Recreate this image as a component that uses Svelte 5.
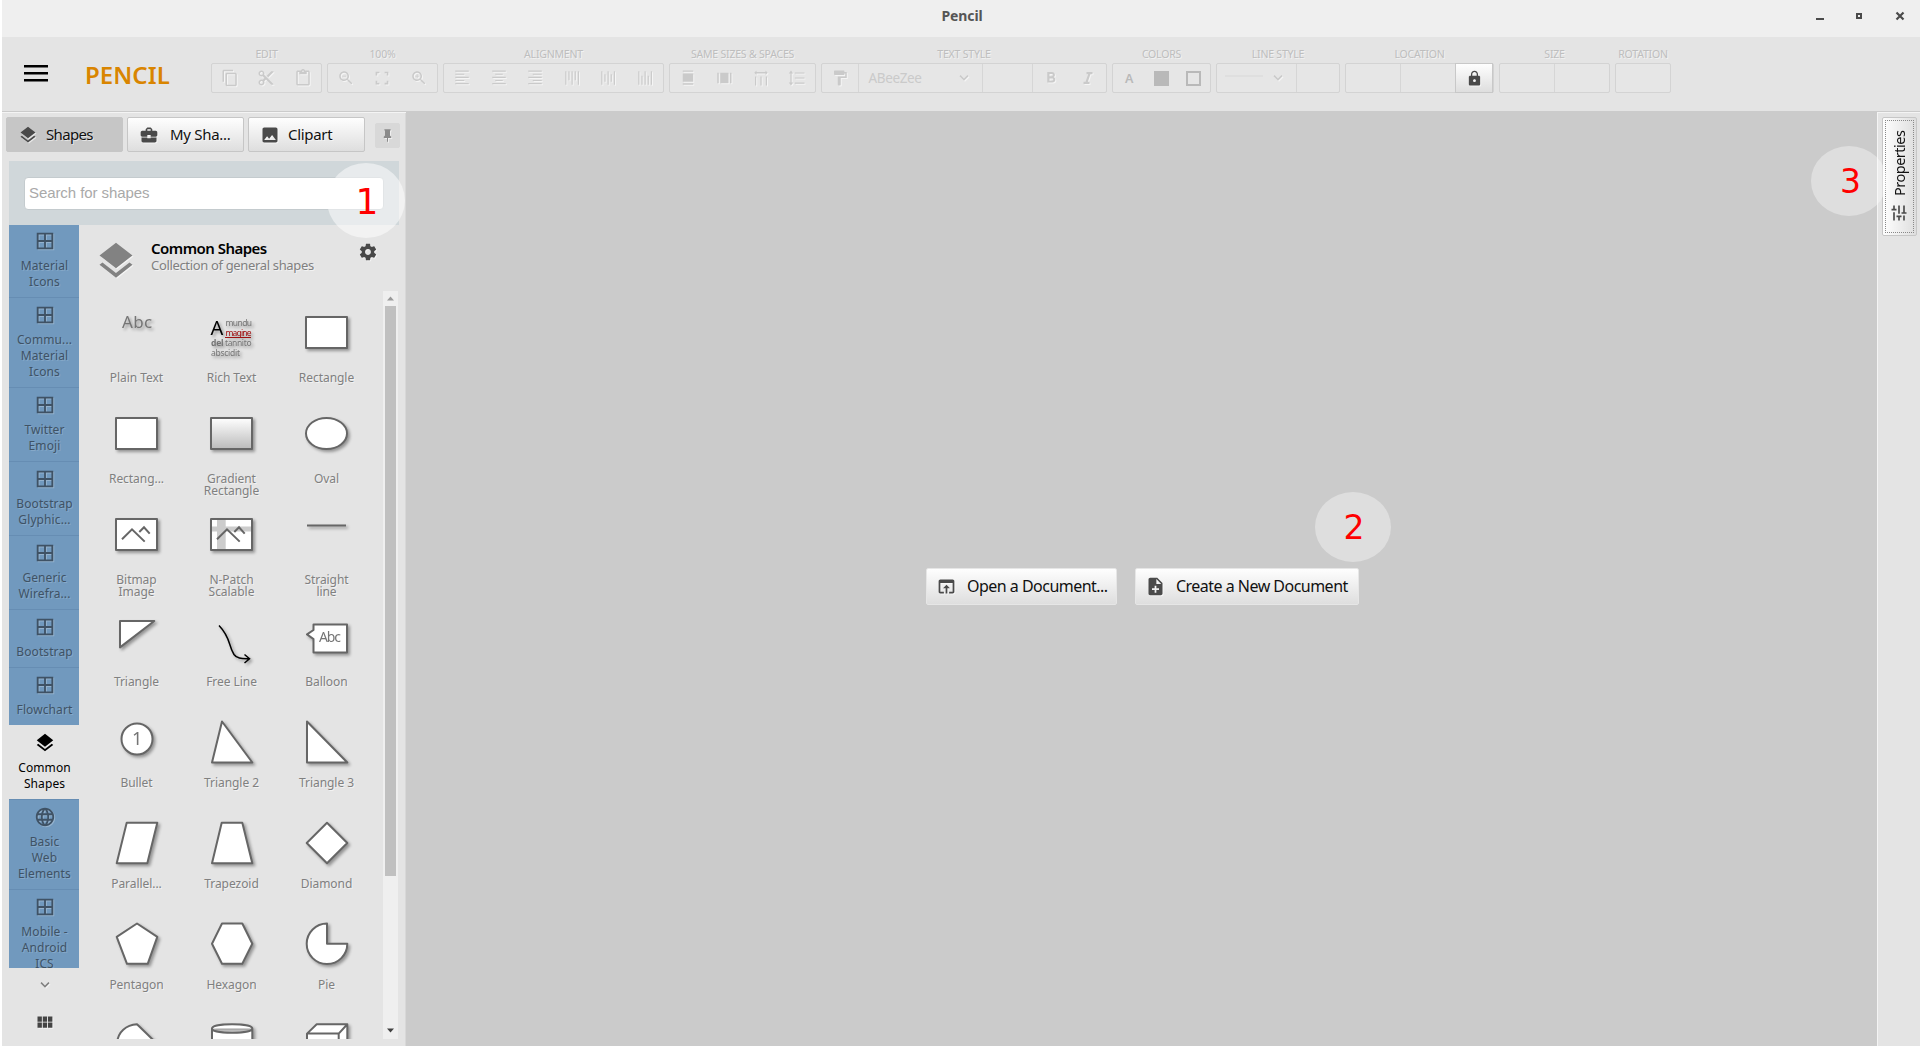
<script>
  const icons = {
    copy: 'M16 1H4c-1.1 0-2 .9-2 2v14h2V3h12V1zm3 4H8c-1.1 0-2 .9-2 2v14c0 1.1.9 2 2 2h11c1.1 0 2-.9 2-2V7c0-1.1-.9-2-2-2zm0 16H8V7h11v14z',
    cut: 'M9.64 7.64c.23-.5.36-1.05.36-1.64 0-2.21-1.79-4-4-4S2 3.79 2 6s1.79 4 4 4c.59 0 1.14-.13 1.64-.36L10 12l-2.36 2.36C7.14 14.13 6.59 14 6 14c-2.21 0-4 1.79-4 4s1.79 4 4 4 4-1.79 4-4c0-.59-.13-1.14-.36-1.64L12 14l7 7h3v-1L9.64 7.64zM6 8c-1.1 0-2-.89-2-2s.9-2 2-2 2 .89 2 2-.9 2-2 2zm0 12c-1.1 0-2-.89-2-2s.9-2 2-2 2 .89 2 2-.9 2-2 2zM19 3l-6 6 2 2 7-7V3z',
    paste: 'M19 2h-4.18C14.4.84 13.3 0 12 0c-1.3 0-2.4.84-2.82 2H5c-1.1 0-2 .9-2 2v16c0 1.1.9 2 2 2h14c1.1 0 2-.9 2-2V4c0-1.1-.9-2-2-2zm-7 0c.55 0 1 .45 1 1s-.45 1-1 1-1-.45-1-1 .45-1 1-1zm7 18H5V4h2v3h10V4h2v16z',
    zoomOut: 'M15.5 14h-.79l-.28-.27C15.41 12.59 16 11.11 16 9.5 16 5.91 13.09 3 9.5 3S3 5.91 3 9.5 5.91 16 9.5 16c1.61 0 3.09-.59 4.23-1.57l.27.28v.79l5 4.99L20.49 19l-4.99-5zm-6 0C7.01 14 5 11.99 5 9.5S7.01 5 9.5 5 14 7.01 14 9.5 11.99 14 9.5 14zM7 9h5v1H7z',
    fit: 'M3.500 8.500V3.500h5v2.200H5.700v2.800zM15.500 3.500h5v5h-2.200V5.700h-2.800zM3.500 15.500h2.200v2.800h2.800v2.200h-5zM18.300 15.500h2.200v5h-5v-2.200h2.800z',
    zoomIn: 'M15.5 14h-.79l-.28-.27C15.41 12.59 16 11.11 16 9.5 16 5.91 13.09 3 9.5 3S3 5.91 3 9.5 5.91 16 9.5 16c1.61 0 3.09-.59 4.23-1.57l.27.28v.79l5 4.99L20.49 19l-4.99-5zm-6 0C7.01 14 5 11.99 5 9.5S7.01 5 9.5 5 14 7.01 14 9.5 11.99 14 9.5 14zM12 10h-2v2H9v-2H7V9h2V7h1v2h2v1z',
    left: 'M3 2h18v1.5H3zM3 6.2h12v1.5H3zM3 10.4h18v1.5H3zM3 14.6h12v1.5H3zM3 18.8h18v1.5H3z',
    center: 'M3 2h18v1.5H3zM7 6.2h10v1.5H7zM3 10.4h18v1.5H3zM7 14.6h10v1.5H7zM3 18.8h18v1.5H3z',
    right: 'M3 2h18v1.5H3zM9 6.2h12v1.5H9zM3 10.4h18v1.5H3zM9 14.6h12v1.5H9zM3 18.8h18v1.5H3z',
    top: 'M3 3h1.5v18H3zM7.2 3h1.5v12H7.2zM11.4 3h1.5v18h-1.5zM15.6 3h1.5v12h-1.5zM19.8 3h1.5v18h-1.5z',
    middle: 'M3 3h1.5v18H3zM7.2 7h1.5v10H7.2zM11.4 3h1.5v18h-1.5zM15.6 7h1.5v10h-1.5zM19.8 3h1.5v18h-1.5z',
    bottom: 'M3 3h1.5v18H3zM7.2 9h1.5v12H7.2zM11.4 3h1.5v18h-1.5zM15.6 9h1.5v12h-1.5zM19.8 3h1.5v18h-1.5z',
    sameW: 'M5 2h14v1.6H5zM5 6h14v11H5zM5 19h14v2H5z',
    sameH: 'M3 5h2v14H3zM7 5h11v14H7zM20 5h2v14h-2z',
    spaceH: 'M3 5l3-3v2h12V2l3 3-3 3V6H6v2zM4 10h1.6v12H4zM11.2 10h1.6v12h-1.6zM18.4 10H20v12h-1.6z',
    spaceV: 'M1 6l3-4 3 4H4.800v12H7l-3 4-3-4h2.200V6zM9 4.5h13V6H9zM9 11.2h13v1.5H9zM9 18h13v1.5H9z',
    paint: 'M18 4V3c0-.55-.45-1-1-1H5c-.55 0-1 .45-1 1v4c0 .55.45 1 1 1h12c.55 0 1-.45 1-1V6h1v4H9v11c0 .55.45 1 1 1h2c.55 0 1-.45 1-1v-9h8V4h-3z',
    chevron: 'M7.41 8.1L12 12.7l4.59-4.6L18 9.5l-6 6-6-6z',
    italic: 'M10 4v3h2.21l-3.42 10H6v3h8v-3h-2.21l3.42-10H18V4z',
    bold: 'M15.6 10.79c.97-.67 1.65-1.77 1.65-2.79 0-2.26-1.75-4-4-4H7v14h7.04c2.09 0 3.71-1.7 3.71-3.79 0-1.52-.86-2.82-2.15-3.42zM10 6.5h3c.83 0 1.5.67 1.5 1.5s-.67 1.5-1.5 1.5h-3v-3zm3.5 9H10v-3h3.5c.83 0 1.5.67 1.5 1.5s-.67 1.5-1.5 1.5z',
    lock: 'M18 8h-1V6c0-2.76-2.24-5-5-5S7 3.24 7 6v2H6c-1.1 0-2 .9-2 2v10c0 1.1.9 2 2 2h12c1.1 0 2-.9 2-2V10c0-1.1-.9-2-2-2zm-6 9c-1.1 0-2-.9-2-2s.9-2 2-2 2 .9 2 2-.9 2-2 2zm3.1-9H8.9V6c0-1.71 1.39-3.1 3.1-3.1 1.71 0 3.1 1.39 3.1 3.1v2z',
    layers: 'M11.99 18.54l-7.37-5.73L3 14.07l9 7 9-7-1.63-1.27-7.38 5.74zM12 16l7.36-5.73L21 9l-9-7-9 7 1.63 1.27L12 16z',
    briefcase: 'M10 16v-1H3.01L3 19c0 1.11.89 2 2 2h14c1.11 0 2-.89 2-2v-4h-7v1h-4zm10-9h-4.01V5l-2-2h-4l-2 2v2H4c-1.1 0-2 .9-2 2v3c0 1.11.89 2 2 2h6v-2h4v2h6c1.1 0 2-.9 2-2V9c0-1.1-.9-2-2-2zm-6 0h-4V5h4v2z',
    image: 'M21 19V5c0-1.1-.9-2-2-2H5c-1.1 0-2 .9-2 2v14c0 1.1.9 2 2 2h14c1.1 0 2-.9 2-2zM8.5 13.5l2.5 3.01L14.5 12l4.5 6H5l3.5-4.5z',
    pin: 'M16 12V4h1V2H7v2h1v8l-2 2v2h5.2v6h1.6v-6H18v-2z',
    gear: 'M19.43 12.98c.04-.32.07-.64.07-.98s-.03-.66-.07-.98l2.11-1.65c.19-.15.24-.42.12-.64l-2-3.46c-.12-.22-.39-.3-.61-.22l-2.49 1c-.52-.4-1.08-.73-1.69-.98l-.38-2.65C14.46 2.18 14.25 2 14 2h-4c-.25 0-.46.18-.49.42l-.38 2.65c-.61.25-1.17.59-1.69.98l-2.49-1c-.23-.09-.49 0-.61.22l-2 3.46c-.13.22-.07.49.12.64l2.11 1.65c-.04.32-.07.65-.07.98s.03.66.07.98l-2.11 1.65c-.19.15-.24.42-.12.64l2 3.46c.12.22.39.3.61.22l2.49-1c.52.4 1.08.73 1.69.98l.38 2.65c.03.24.24.42.49.42h4c.25 0 .46-.18.49-.42l.38-2.65c.61-.25 1.17-.59 1.69-.98l2.49 1c.23.09.49 0 .61-.22l2-3.46c.12-.22.07-.49-.12-.64l-2.11-1.65zM12 15.5c-1.93 0-3.5-1.57-3.5-3.5s1.57-3.5 3.5-3.5 3.5 1.57 3.5 3.5-1.57 3.5-3.5 3.5z',
    grid: 'M3 3v18h18V3H3zm8 16H5v-6h6v6zm0-8H5V5h6v6zm8 8h-6v-6h6v6zm0-8h-6V5h6v6z',
    globe: 'M11.99 2C6.47 2 2 6.48 2 12s4.47 10 9.99 10C17.52 22 22 17.52 22 12S17.52 2 11.99 2zm6.93 6h-2.95c-.32-1.25-.78-2.45-1.38-3.56 1.84.63 3.37 1.91 4.33 3.56zM12 4.04c.83 1.2 1.48 2.53 1.91 3.96h-3.82c.43-1.43 1.08-2.76 1.91-3.96zM4.26 14C4.1 13.36 4 12.69 4 12s.1-1.36.26-2h3.38c-.08.66-.14 1.32-.14 2 0 .68.06 1.34.14 2H4.26zm.82 2h2.95c.32 1.25.78 2.45 1.38 3.56-1.84-.63-3.37-1.9-4.33-3.56zm2.95-8H5.08c.96-1.66 2.49-2.93 4.33-3.56C8.81 5.55 8.35 6.75 8.03 8zM12 19.96c-.83-1.2-1.48-2.53-1.91-3.96h3.82c-.43 1.43-1.08 2.76-1.91 3.96zM14.34 14H9.66c-.09-.66-.16-1.32-.16-2 0-.68.07-1.35.16-2h4.68c.09.65.16 1.32.16 2 0 .68-.07 1.34-.16 2zm.25 5.56c.6-1.11 1.06-2.31 1.38-3.56h2.95c-.96 1.65-2.49 2.93-4.33 3.56zM16.36 14c.08-.66.14-1.32.14-2 0-.68-.06-1.34-.14-2h3.38c.16.64.26 1.31.26 2s-.1 1.36-.26 2h-3.38z',
    module: 'M4 11h5V5H4v6zm0 7h5v-6H4v6zm6 0h5v-6h-5v6zm6 0h5v-6h-5v6zm-6-7h5V5h-5v6zm6-6v6h5V5h-5z',
    open: 'M19 4H5c-1.11 0-2 .9-2 2v12c0 1.1.89 2 2 2h4v-2H5V8h14v10h-4v2h4c1.1 0 2-.9 2-2V6c0-1.1-.89-2-2-2zm-7 6l-4 4h3v6h2v-6h3l-4-4z',
    add: 'M14 2H6c-1.1 0-1.99.9-1.99 2L4 20c0 1.1.89 2 1.99 2H18c1.1 0 2-.9 2-2V8l-6-6zm2 14h-3v3h-2v-3H8v-2h3v-3h2v3h3v2zm-3-7V3.5L18.5 9H13z',
    tune: 'M3 17v2h6v-2H3zM3 5v2h10V5H3zm10 16v-2h8v-2h-8v-2h-2v6h2zM7 9v2H3v2h4v2h2V9H7zm14 4v-2H11v2h10zm-6-4h2V7h4V5h-4V3h-2v6z'
  };

  const iconGroups = [
    { label: 'EDIT', items: ['copy', 'cut', 'paste'] },
    { label: '100%', items: ['zoomOut', 'fit', 'zoomIn'] },
    { label: 'ALIGNMENT', items: ['left', 'center', 'right', 'top', 'middle', 'bottom'], wide: true },
    { label: 'SAME SIZES & SPACES', items: ['sameW', 'sameH', 'spaceH', 'spaceV'], same: true }
  ];

  const tabs = [
    { icon: 'layers', label: 'Shapes', active: true },
    { icon: 'briefcase', label: 'My Sha...' },
    { icon: 'image', label: 'Clipart' }
  ];

  const collections = [
    { icon: 'grid', lines: ['Material', 'Icons'] },
    { icon: 'grid', lines: ['Commu...', 'Material', 'Icons'] },
    { icon: 'grid', lines: ['Twitter', 'Emoji'] },
    { icon: 'grid', lines: ['Bootstrap', 'Glyphic...'] },
    { icon: 'grid', lines: ['Generic', 'Wirefra...'] },
    { icon: 'grid', lines: ['Bootstrap'] },
    { icon: 'grid', lines: ['Flowchart'] },
    { icon: 'layers', lines: ['Common', 'Shapes'], active: true },
    { icon: 'globe', lines: ['Basic', 'Web', 'Elements'] },
    { icon: 'grid', lines: ['Mobile -', 'Android', 'ICS'] }
  ];

  const box = 'M11 12h41v31H11z';
  const shapes = [
    { id: 'plain', lines: ['Plain Text'] },
    { id: 'rich', lines: ['Rich Text'] },
    { d: box, lines: ['Rectangle'] },
    { d: box, lines: ['Rectang...'] },
    { id: 'gradient', lines: ['Gradient', 'Rectangle'] },
    { id: 'oval', lines: ['Oval'] },
    { id: 'bitmap', lines: ['Bitmap', 'Image'] },
    { id: 'npatch', lines: ['N-Patch', 'Scalable'] },
    { d: 'M12 18.5H51', lines: ['Straight', 'line'] },
    { d: 'M15 12H49.3L15 38.4z', lines: ['Triangle'] },
    { id: 'free', lines: ['Free Line'] },
    { id: 'balloon', lines: ['Balloon'] },
    { id: 'bullet', lines: ['Bullet'] },
    { d: 'M22 11.5L52.3 52.5H12z', lines: ['Triangle 2'] },
    { d: 'M12 11.5L52.3 52.5H12z', lines: ['Triangle 3'] },
    { d: 'M21.7 11.7H52.3L42.3 52.3H11.7z', lines: ['Parallel...'] },
    { d: 'M21.7 11.7H42.3L52.3 52.3H12z', lines: ['Trapezoid'] },
    { d: 'M32 11.7L52.3 32 32 52.3 11.7 32z', lines: ['Diamond'] },
    { d: 'M32 11.5L52.3 24.8 42.7 51.8H22L11.7 24.8z', lines: ['Pentagon'] },
    { d: 'M22 11.5H42.3L52.3 31.8 42.3 51.8H22L12 31.8z', lines: ['Hexagon'] },
    { d: 'M32 11.5A20.3 20.3 0 1 0 52.3 31.8H32z', lines: ['Pie'] },
    { d: 'M12 32C12 18 22 12 32 11.3L52.3 31 32 52z', lines: [] },
    { d: 'M12 15.5C12 9.8 52.3 9.8 52.3 15.5V48H12zC12 21.2 52.3 21.2 52.3 15.5', lines: [] },
    { d: 'M12 20.6L21.7 11.3H52.3V43L43.7 52H12zH43.7V52M43.7 20.6L52.3 11.3', lines: [] }
  ];
</script>

{#snippet icon(name, cls = '')}
  <svg class="icon {cls}" viewBox="0 0 24 24"><path d={icons[name]} /></svg>
{/snippet}

<div class="window">
  <header class="titlebar">
    <span class="title">Pencil</span>
    <svg class="controls" viewBox="0 0 100 20">
      <path d="M6 10h8v2H6z" />
      <path fill-rule="evenodd" d="M46 5h6v6h-6zM48 7v2h2V7z" />
      <path class="close" d="M86.5 4.500l7 7M93.500 4.500l-7 7" />
    </svg>
  </header>

  <div class="toolbar">
    <svg class="burger" viewBox="0 0 24 17"><path d="M0 0h24v2.500H0zM0 7h24v2.500H0zM0 14h24v2.500H0z" /></svg>
    <span class="brand">PENCIL</span>
    <div class="groups">
      {#each iconGroups as g}
        <div class="group">
          <span class="glabel">{g.label}</span>
          <div class="gbox" class:wide={g.wide} class:same={g.same}>
            {#each g.items as i}
              <span class="tool">{@render icon(i)}</span>
            {/each}
          </div>
        </div>
      {/each}
      <div class="group">
        <span class="glabel">TEXT STYLE</span>
        <div class="gbox textbox">
          <span class="tool">{@render icon('paint')}</span>
          <span class="font">ABeeZee {@render icon('chevron')}</span>
          <span class="fsize"></span>
          <span class="tool">{@render icon('bold', 'big')}</span>
          <span class="tool">{@render icon('italic')}</span>
        </div>
      </div>
      <div class="group">
        <span class="glabel">COLORS</span>
        <div class="gbox colors">
          <span class="letter">A</span>
          <span><i class="fill"></i></span>
          <span><i class="line"></i></span>
        </div>
      </div>
      <div class="group">
        <span class="glabel">LINE STYLE</span>
        <div class="gbox linestyle">
          <span class="stroke"><i></i>{@render icon('chevron')}</span>
          <span></span>
        </div>
      </div>
      <div class="group">
        <span class="glabel">LOCATION</span>
        <div class="gbox location">
          <span></span><span></span>
          <span class="lock">{@render icon('lock')}</span>
        </div>
      </div>
      <div class="group">
        <span class="glabel">SIZE</span>
        <div class="gbox size"><span></span><span></span></div>
      </div>
      <div class="group">
        <span class="glabel">ROTATION</span>
        <div class="gbox rotation"></div>
      </div>
    </div>
  </div>

  <div class="body">
    <aside class="sidebar">
      <div class="tabs">
        {#each tabs as t}
          <button class="tab" class:active={t.active}>{@render icon(t.icon)}<span>{t.label}</span></button>
        {/each}
        <button class="pin">{@render icon('pin')}</button>
      </div>
      <div class="search"><input placeholder="Search for shapes" /></div>
      <div class="panes">
        <div class="rail">
          <div class="collections">
            {#each collections as c}
              <div class="collection" class:active={c.active}>
                {@render icon(c.icon)}
                {#each c.lines as l}<span>{l}</span>{/each}
              </div>
            {/each}
          </div>
          <div class="more">{@render icon('chevron')}</div>
          <div class="all">{@render icon('module')}</div>
        </div>

        <div class="shapes">
          <div class="head">
            {@render icon('layers', 'huge')}
            <div class="headtext">
              <strong>Common Shapes</strong>
              <span>Collection of general shapes</span>
            </div>
            {@render icon('gear', 'gear')}
          </div>
          <div class="scroller">
            <div class="grid">
              {#each shapes as s}
                <div class="cell">
                  <svg class="shape" viewBox="0 0 63 64">
                    {#if s.d}
                      <path class="o" d={s.d} />
                    {:else if s.id === 'plain'}
                      <text class="abc" x="32" y="23" text-anchor="middle" textLength="30">Abc</text>
                    {:else if s.id === 'rich'}
                      <text class="cap" x="10.5" y="30" textLength="12">A</text>
                      <text class="tiny" x="25.500" y="21" textLength="26.500">mundu</text>
                      <text class="tiny red" x="25.500" y="31" textLength="26">magine</text>
                      <path class="under" d="M25 32.5h26" />
                      <text class="tiny b" x="11" y="41" textLength="12.500">del</text>
                      <text class="tiny" x="25" y="41" textLength="26.500">tannito</text>
                      <text class="tiny" x="11" y="51" textLength="29">abscidit</text>
                    {:else if s.id === 'gradient'}
                      <linearGradient id="fade" x1="0" y1="0" x2="0" y2="1">
                        <stop offset="0" stop-color="#fff" /><stop offset="1" stop-color="#bbb" />
                      </linearGradient>
                      <path class="o" style:fill="url(#fade)" d={box} />
                    {:else if s.id === 'oval'}
                      <ellipse class="o" cx="31.5" cy="27.5" rx="20.5" ry="15.500" />
                    {:else if s.id === 'bitmap' || s.id === 'npatch'}
                      <path class="o" d={box} />
                      <path class="o n" d="M17 32.300l10-10 12.700 12.300M34.300 25l4.700-4.700 5.700 6.300" />
                      {#if s.id === 'npatch'}
                        <path class="band" d="M17 11h8.700v33H17zM10 19.600h43v5H10z" />
                      {/if}
                    {:else if s.id === 'free'}
                      <path class="free" d="M19 16.500C31 29 28 36 34 45.500C37 50 43 49.500 49 49.700M44.500 45.500L49.500 49.700 44.500 54" />
                    {:else if s.id === 'balloon'}
                      <path class="o" d="M18.500 15.600H52V43.400H18.500V30L12 25.400 18.500 21z" />
                      <text class="abc small" x="35" y="33.200" text-anchor="middle" textLength="22">Abc</text>
                    {:else}
                      <circle class="o" cx="32" cy="29" r="15.500" />
                      <text class="abc one" x="32" y="35.200" text-anchor="middle">1</text>
                    {/if}
                  </svg>
                  {#each s.lines as l}<span>{l}</span>{/each}
                </div>
              {/each}
            </div>
            <div class="scrollbar">
              <svg viewBox="0 0 15 15"><path class="up" d="M4 9.500l3.500-4 3.500 4z" /></svg>
              <div class="thumb"></div>
              <svg viewBox="0 0 15 15"><path d="M4 5.500l3.500 4 3.500-4z" /></svg>
            </div>
          </div>
        </div>
      </div>
    </aside>

    <main class="canvas">
      <button class="doc">{@render icon('open')}<span>Open a Document...</span></button>
      <button class="doc new">{@render icon('add')}<span>Create a New Document</span></button>
    </main>

    <aside class="right">
      <button class="properties">{@render icon('tune')}<span>Properties</span></button>
    </aside>
  </div>

  <div class="badge one"><span>1</span></div>
  <div class="badge two"><span>2</span></div>
  <div class="badge three"><span>3</span></div>
</div>

<style>
  :global(body) { background: #fff; overflow: hidden; }
  * { box-sizing: border-box; }
  .window {
    position: relative; display: flex; flex-direction: column;
    width: 1920px; height: 1046px; padding-left: 2px;
    font-family: "Noto Sans", "Open Sans", sans-serif; font-size: 16px; color: #111;
  }
  button { font: inherit; color: inherit; padding: 0; border: 1px solid #c6c6c6; border-radius: 2px; background: linear-gradient(#fefefe, #dedede); }
  .icon { width: 18px; height: 18px; fill: currentColor; flex: none; display: block; filter: drop-shadow(1px 1px 0 rgba(255, 255, 255, .6)); }

  .titlebar { height: 37px; background: #efefef; display: flex; justify-content: center; position: relative; }
  .title { font-weight: 700; font-size: 14px; line-height: 32px; color: #555; margin-left: 2px; letter-spacing: -.1px; }
  .controls { position: absolute; right: 10px; top: 8px; width: 100px; height: 20px; fill: #4a4a4a; }
  .close { stroke: #4a4a4a; stroke-width: 2.2; }

  .toolbar { height: 75px; background: #e4e4e4; border-bottom: 1px solid #cbcbcb; display: flex; }
  .burger { width: 24px; height: 17px; margin: 28px 37px 0 22px; }
  .brand { width: 126px; font-size: 24px; font-weight: 600; color: #d98500; line-height: 34px; padding-top: 21px; letter-spacing: .05px; }
  .groups { display: flex; gap: 5px; }
  .group { display: flex; flex-direction: column; align-items: center; color: #cacaca; }
  .glabel { font-size: 10.500px; line-height: 14px; margin: 10px 0 2px; height: 14px; color: #bebebe; letter-spacing: -.2px; white-space: nowrap; text-shadow: 1px 1px 0 #f2f2f2; }
  .gbox { width: 111px; height: 30px; border: 1px solid #d3d3d3; border-radius: 2px; background: #e6e6e6; display: flex; }
  .gbox.wide { width: 221px; }
  .gbox.same { width: 147px; }
  .tool { width: 36.500px; display: flex; align-items: center; justify-content: center; }
  .tool .icon { width: 18px; height: 18px; }
  .textbox { width: 286px; }
  .font { width: 125px; border: solid #d6d6d6; border-width: 0 1px; display: flex; justify-content: space-between; align-items: center; padding: 0 9px; font-size: 13.500px; letter-spacing: -.35px; }
  .fsize { width: 50px; border-right: 1px solid #d6d6d6; }
  .colors { width: 99px; color: #b9b9b9; }
  .colors span { flex: 1; display: flex; align-items: center; justify-content: center; }
  .letter { font-size: 12.500px; font-weight: 600; }
  .fill { width: 15px; height: 15px; background: #b9b9b9; }
  .line { width: 15px; height: 15px; border: 2px solid #b9b9b9; }
  .linestyle { width: 124px; }
  .stroke { width: 80px; border-right: 1px solid #d6d6d6; display: flex; align-items: center; padding-left: 8px; }
  .stroke i { width: 38px; height: 2px; background: #dfdfdf; margin: -4px 6px 0 0; }
  .location { width: 149px; }
  .location span { width: 55px; border-right: 1px solid #d6d6d6; }
  .location .lock { width: 38px; margin: -1px; border: 1px solid #c8c8c8; background: linear-gradient(#fefefe, #dedede); color: #4a4a4a; display: flex; align-items: center; justify-content: center; }
  .lock .icon { width: 17px; height: 17px; }
  .size span { width: 55px; }
  .size span:first-child { border-right: 1px solid #d6d6d6; }
  .rotation { width: 56px; }

  .body { flex: 1; display: flex; min-height: 0; }
  .sidebar { width: 404px; background: #e4e4e4; border-top: 1px solid #f4f4f4; flex: none; display: flex; flex-direction: column; box-shadow: inset -1px 0 #d8d8d8; }
  .tabs { display: flex; gap: 4px; padding: 4px 0 9px 4px; }
  .tab { width: 117px; height: 35px; display: flex; align-items: center; padding-left: 12px; text-align: left; }
  .tab .icon { margin: 0 11px 0 -1px; color: #4a4a4a; width: 20px; height: 20px; }
  .tab span { letter-spacing: -.65px; font-size: 15px; text-shadow: 1px 1px 0 #fff8; margin-top: -1px; }
  .tab.active { background: #c6c6c6; }
  .tab:nth-child(1) .icon, .tab:nth-child(3) .icon { margin-right: 8px; }
  .tab:nth-child(3) span { letter-spacing: -.3px; }
  .tab:nth-child(2) span { letter-spacing: -.3px; }
  .pin { width: 25px; height: 25px; margin: 6px 0 0 6px; border-color: #d8d8d8; background: #d8d8d8; display: flex; align-items: center; justify-content: center; color: #8a8a8a; }
  .pin .icon { width: 15px; height: 15px; }
  .search { margin-left: 7px; width: 390px; height: 64px; background: #d0d7da; padding: 16px 15px; }
  .search input { display: block; width: 360px; height: 33px; border: 1px solid #c4cbce; border-radius: 4px; padding: 0 4px 2px; font: 15px "Liberation Sans", sans-serif; letter-spacing: -.08px; background: #fff; }
  .search input::placeholder { color: #a9a9a9; }

  .panes { flex: 1; display: flex; min-height: 0; margin-left: 7px; }
  .rail { width: 70px; flex: none; }
  .collections { height: 743px; overflow: hidden; }
  .collection { background: #7199be; border-top: 1px solid #668db3; color: #3f5265; padding: 6px 0 7px 1px; display: flex; flex-direction: column; align-items: center; font-size: 12px; line-height: 16px; letter-spacing: .1px; text-shadow: 1px 1px 0 #86a9c9; }
  .collection:first-child { margin-top: -2px; }
  .collection .icon { width: 22px; height: 22px; margin-bottom: 6px; filter: drop-shadow(1px 1px 0 rgba(255, 255, 255, .25)); }
  .collection.active { background: #e4e4e4; border-color: #e4e4e4; color: #000; text-shadow: none; }
  .more, .all { display: flex; justify-content: center; color: #808080; }
  .more { padding: 8px 0 0 1px; }
  .all { color: #444; padding-top: 18px; }
  .all .icon { width: 21px; height: 21px; margin-left: 1px; }

  .shapes { flex: 1; display: flex; flex-direction: column; }
  .head { height: 66px; display: flex; flex: none; }
  .huge { width: 44px; height: 44px; color: #828282; margin: 14px 13px 0 15px; }
  .headtext { width: 202px; padding-top: 14px; display: flex; flex-direction: column; }
  .headtext strong { font-size: 15px; font-weight: 600; line-height: 18px; letter-spacing: -.52px; color: #000; }
  .headtext span { font-size: 13px; line-height: 17px; letter-spacing: -.34px; color: #808080; text-shadow: 1px 1px 0 #f2f2f2; white-space: nowrap; }
  .gear { width: 20px; height: 20px; margin: 17px 0 0 5px; color: #484848; }
  .scroller { height: 748px; overflow: hidden; display: flex; }
  .grid { margin-left: 10px; width: 294px; display: grid; grid-template-columns: repeat(3, 95px); grid-auto-rows: 101.200px; padding-top: 14px; flex: none; }
  .cell { display: flex; flex-direction: column; align-items: center; font-size: 12px; line-height: 12px; letter-spacing: -.05px; color: #808080; white-space: nowrap; text-shadow: 1px 1px 0 #f2f2f2; }
  .shape { width: 63px; height: 64px; margin-bottom: 3px; flex: none; filter: drop-shadow(2px 2px 1.5px rgba(0, 0, 0, .35)); overflow: visible; }
  .o { fill: #fff; stroke: #666; stroke-width: 2; stroke-linejoin: round; }
  .o.n { fill: none; stroke-linejoin: miter; }
  .band { fill: rgba(100, 100, 100, .33); }
  .free { fill: none; stroke: #000; stroke-width: 1.5; }
  .shape text { text-shadow: none; }
  .abc { font-size: 17px; fill: #757575; }
  .abc.small { font-size: 14px; }
  .abc.one { font-size: 18px; }
  .cap { font-size: 20px; fill: #000; }
  .tiny { font-size: 8.500px; fill: #757575; }
  .red { fill: #a01010; }
  .under { stroke: #a01010; stroke-width: 1; }
  .b { font-weight: 700; }
  .scrollbar { width: 15px; background: #efefef; display: flex; flex-direction: column; align-items: center; }
  .scrollbar svg { width: 15px; height: 15px; fill: #404040; }
  .up { fill: #9a9a9a; }
  .thumb { width: 11px; height: 570px; background: #c0c0c0; margin-bottom: 147px; }

  .canvas { flex: 1; background: #cbcbcb; display: flex; justify-content: center; align-items: flex-start; gap: 18px; padding: 456px 0 0 2px; }
  .doc { width: 191px; height: 37px; border-color: #e6e6e6; display: flex; align-items: center; padding-left: 9px; white-space: nowrap; }
  .doc.new { width: 224px; }
  .doc .icon { width: 21px; height: 21px; margin-right: 10px; color: #4a4a4a; }
  .doc span { font-size: 16px; letter-spacing: -.52px; margin-top: -1px; }
  .right { width: 43px; background: #e4e4e4; border: solid #f4f4f4; border-width: 1px 0 0 1px; }
  .properties { margin: 4px 0 0 4px; width: 35px; height: 119px; writing-mode: vertical-rl; transform: rotate(180deg); background: linear-gradient(to left, #fefefe, #dedede); display: flex; align-items: center; padding-top: 12px; outline: 1px dotted #888; outline-offset: -4px; white-space: nowrap; }
  .properties .icon { transform: rotate(90deg); width: 20px; height: 20px; margin-bottom: 7px; color: #4a4a4a; filter: none; }
  .properties span { font-size: 14.500px; letter-spacing: -.5px; margin-left: 2px; }

  .badge { position: absolute; border-radius: 50%; background: rgba(255, 255, 255, .37); color: #f00; font-family: "DejaVu Sans", sans-serif; display: flex; align-items: center; justify-content: center; font-size: 33px; line-height: 1; padding: 1px 0 0 2px; }
  .badge.one { left: 327px; top: 163px; width: 78px; height: 75px; background: rgba(255, 255, 255, .5); font-size: 36px; padding-top: 3px; }
  .badge.two { left: 1315px; top: 492px; width: 76px; height: 70px; }
  .badge.three { left: 1811px; top: 146px; width: 76px; height: 70px; padding-left: 3px; }
</style>
